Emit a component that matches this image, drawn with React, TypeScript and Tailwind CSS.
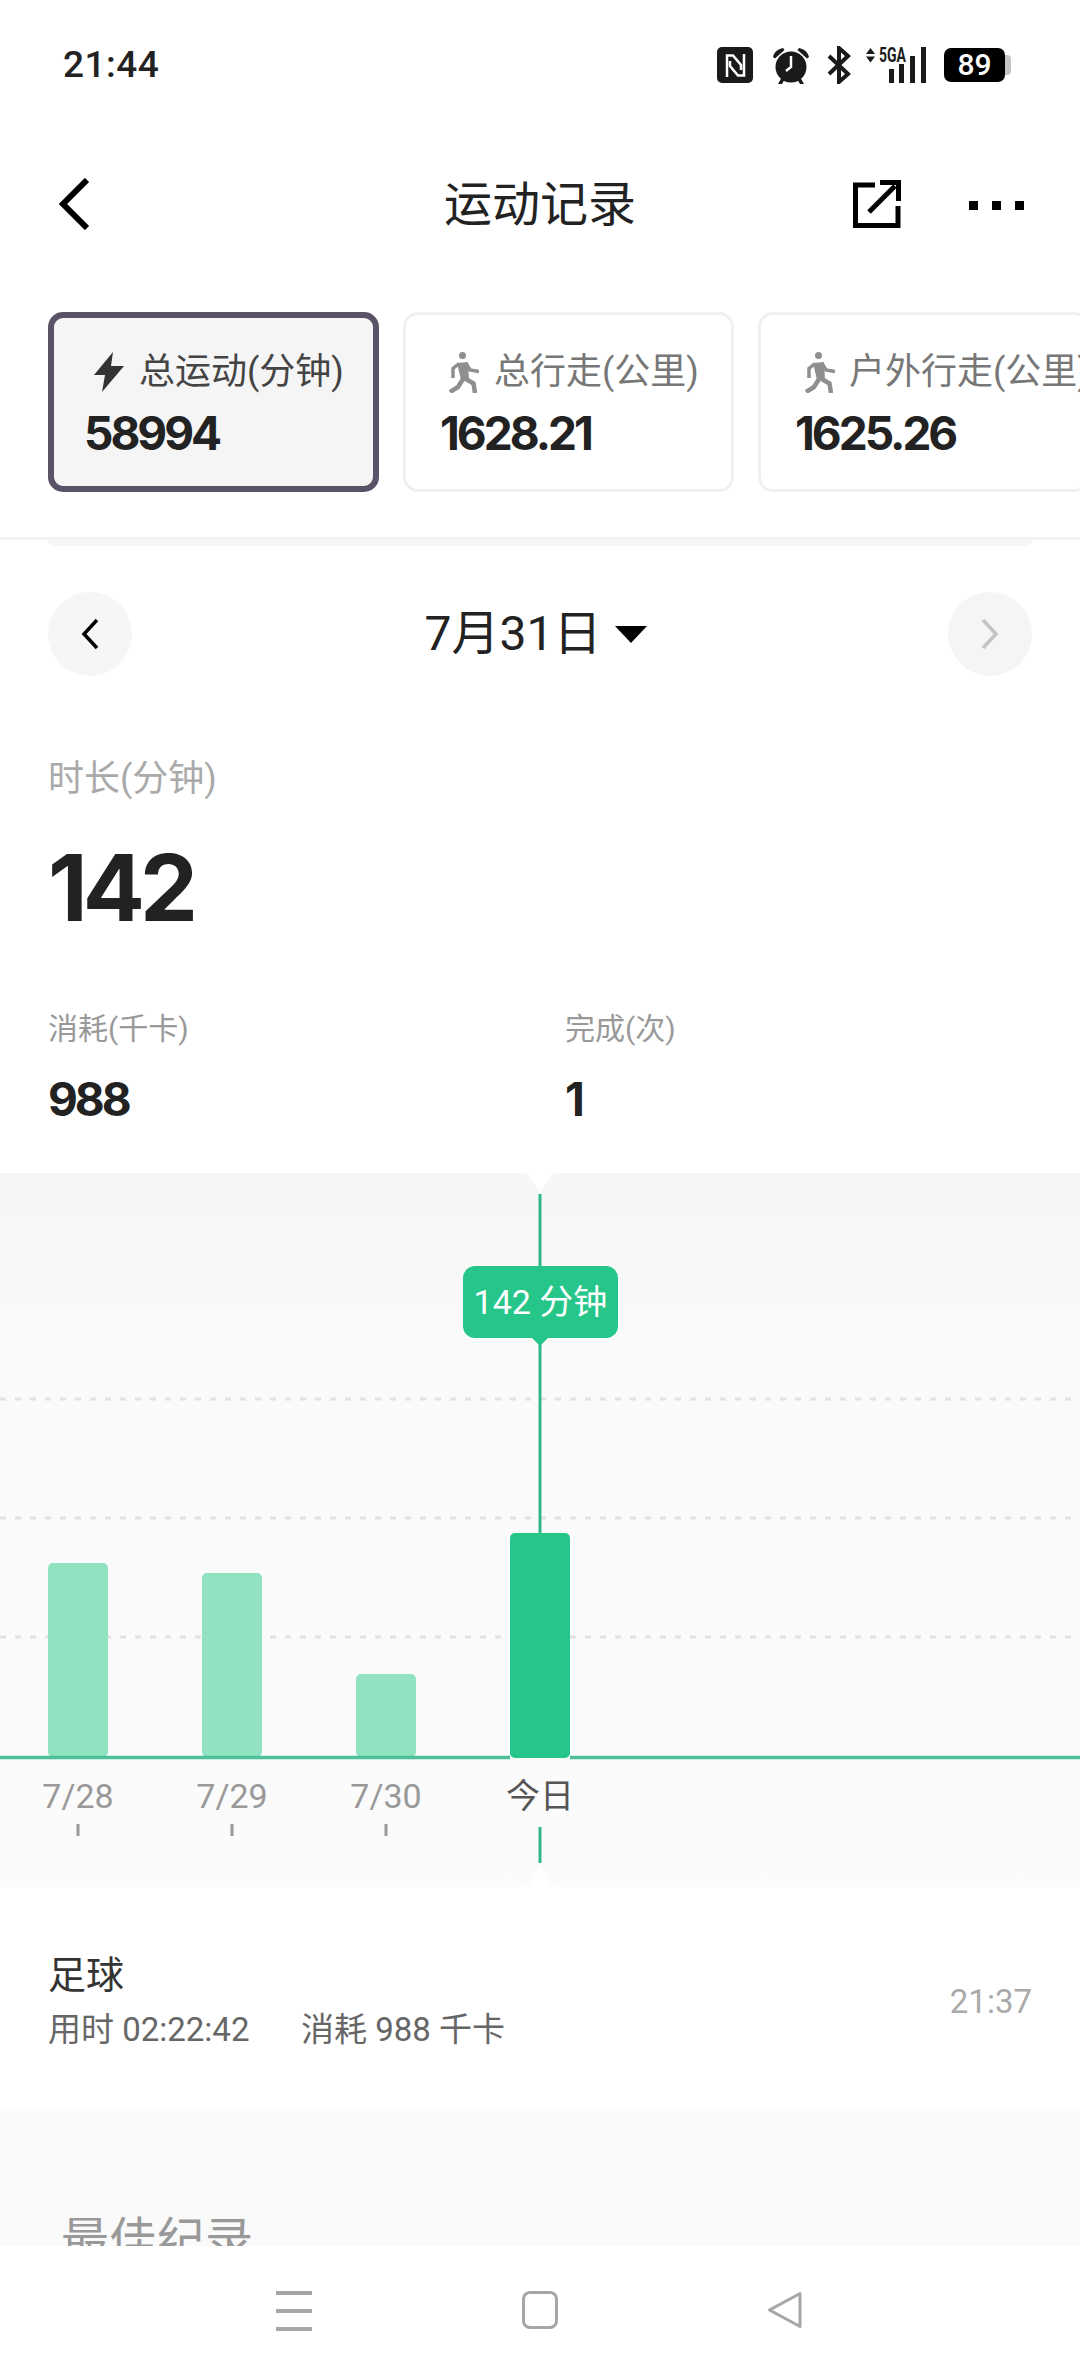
const cjk = '[font-family:Roboto,"Noto_Sans_CJK_SC",sans-serif]';

function Walker({ className }: { className?: string }) {
  return (
    <svg viewBox="0 0 30 41" className={className} fill="none" stroke="#8f8f8f">
      <circle cx="13.5" cy="3.500" r="3.500" fill="#8f8f8f" stroke="none" />
      <path d="M8 11l11-1 1 18h-8z" fill="#8f8f8f" stroke="none" />
      <path d="M18 13l3 5 9 1.500" strokeWidth="3.500" />
      <path d="M10 11.500l-6 5v9.500" strokeWidth="3.500" />
      <path d="M15 26l9.500 5.500 1.500 9.500" strokeWidth="4.500" />
      <path d="M14 27l-5 8-8 5" strokeWidth="4.500" />
    </svg>
  );
}

function StatCard({
  label,
  value,
  active,
  icon,
}: {
  label: string;
  value: string;
  active?: boolean;
  icon: React.ReactNode;
}) {
  return (
    <div
      className={
        active
          ? "w-[331px] h-[180px] shrink-0 rounded-[15px] border-[6px] border-[#5a5266] bg-[#f5f5f6] pl-[31px] pt-[29px]"
          : "w-[331px] h-[180px] shrink-0 rounded-[15px] border-[3px] border-[#f0f0f0] bg-white pl-[34px] pt-[32px]"
      }
    >
      <div className="flex items-center h-[50px] whitespace-nowrap">
        {icon}
        <span className={active ? "text-[36px] leading-[50px] text-[#444]" : "text-[36px] leading-[50px] text-[#777]"}>{label}</span>
      </div>
      <div className={active ? "mt-[10px] -ml-[1px] text-[46px] leading-[52px] font-bold tracking-[-3px] text-[#222] [font-family:Inter,sans-serif]" : "mt-[10px] text-[46px] leading-[52px] font-bold tracking-[-3px] text-[#222] [font-family:Inter,sans-serif]"}>{value}</div>
    </div>
  );
}

export default function App() {
  return (
    <div className={`relative w-[1080px] h-[2376px] overflow-hidden bg-white ${cjk}`}>
      {/* status bar */}
      <div className="h-[130px] flex items-center justify-between pl-[63px] pr-[69px]">
        <span className="text-[37px] font-medium text-[#222] tracking-[0.5px]">21:44</span>
        <div className="flex items-center h-[40px]">
          <svg viewBox="0 0 36 36" className="w-[36px] h-[36px]">
            <rect width="36" height="36" rx="5" fill="#1a1a1a" />
            <path d="M10 30V8.500h6L24 18v5M27 7V28.500h-6L13 19v-5" fill="none" stroke="#fff" strokeWidth="2.500" />
          </svg>
          <svg viewBox="0 0 38 38" className="w-[38px] h-[38px] ml-[19px]">
            <path d="M1 11C2 6 6 3 11 2l1.500 2L3 12.500zM37 11C36 6 32 3 27 2l-1.500 2L35 12.500z" fill="#1a1a1a" />
            <circle cx="19" cy="21" r="15.500" fill="#1a1a1a" />
            <path d="M6 38l4-7h4l-4 7zM32 38l-4-7h-4l4 7z" fill="#1a1a1a" />
            <path d="M19 10v11l-5 4" fill="none" stroke="#fff" strokeWidth="2.500" />
          </svg>
          <svg viewBox="0 0 24 38" className="w-[24px] h-[38px] ml-[17px]">
            <path d="M2 10l19 18-9 8V2l9 8L2 28" fill="none" stroke="#1a1a1a" strokeWidth="4" />
          </svg>
          <div className="relative w-[62px] h-[38px] ml-[15px]">
            <svg viewBox="0 0 62 38" className="absolute inset-0 w-[62px] h-[38px]">
              <path d="M0 8l4.500-6 4.500 6zM0 10.500l4.500 6 4.500-6z" fill="#1a1a1a" />
              <rect x="23" y="23" width="5" height="14" fill="#1a1a1a" />
              <rect x="33" y="18" width="5" height="19" fill="#1a1a1a" />
              <rect x="44" y="10" width="5" height="27" fill="#1a1a1a" />
              <rect x="55" y="1" width="5" height="36" fill="#1a1a1a" />
            </svg>
            <span className="absolute left-[13px] top-[-3px] text-[20px] leading-[24px] font-bold text-[#1a1a1a] scale-x-[0.7] origin-left">5GA</span>
          </div>
          <div className="ml-[16px] flex items-center">
            <div className="w-[61px] h-[34px] rounded-[7px] bg-black text-white text-[30px] leading-[34px] font-medium text-center">89</div>
            <div className="w-[6px] h-[20px] rounded-r-[4px] bg-[#c4c4c4]" />
          </div>
        </div>
      </div>

      {/* nav bar */}
      <div className="relative h-[150px] flex items-center justify-center">
        <svg viewBox="0 0 32 52" className="absolute left-[58px] top-[48px] w-[32px] h-[52px]">
          <path d="M29 2L5 26l24 24" fill="none" stroke="#000" strokeWidth="6" />
        </svg>
        <span className="text-[48px] text-[#222]">运动记录</span>
        <svg viewBox="0 0 48 48" className="absolute left-[853px] top-[50px] w-[48px] h-[48px]">
          <path d="M22 5H2.500v40.500H45V26" fill="none" stroke="#000" strokeWidth="5" />
          <path d="M16 32L42 6" fill="none" stroke="#000" strokeWidth="5" />
          <path d="M27 0h21v21h-5V5H27z" fill="#000" />
        </svg>
        <div className="absolute left-[969px] top-[71px] flex gap-[14px]">
          <div className="w-[9px] h-[9px] bg-black" />
          <div className="w-[9px] h-[9px] bg-black" />
          <div className="w-[9px] h-[9px] bg-black" />
        </div>
      </div>

      {/* stat cards */}
      <div className="mt-[32px] pl-[48px] flex gap-[24px]">
        <StatCard
          active
          label="总运动(分钟)"
          value="58994"
          icon={
            <svg viewBox="0 0 30 40" className="w-[30px] h-[40px] shrink-0 ml-[9px] mr-[15px]">
              <path d="M19 0L0 23h11L8 40l22-26H17z" fill="#333" />
            </svg>
          }
        />
        <StatCard label="总行走(公里)" value="1628.21" icon={<Walker className="w-[30px] h-[41px] shrink-0 ml-[9px] mr-[15px]" />} />
        <StatCard label="户外行走(公里)" value="1625.26" icon={<Walker className="w-[30px] h-[41px] shrink-0 ml-[10px] mr-[14px]" />} />
      </div>

      {/* divider */}
      <div className="mt-[45px] h-[3px] bg-[#f3f3f3]" />
      <div className="mx-[48px] h-[6px] rounded-b-[10px] bg-[#f6f6f6]" />

      {/* date switcher */}
      <div className="mt-[46px] h-[84px] px-[48px] flex items-center justify-between">
        <div className="w-[84px] h-[84px] rounded-full bg-[#f6f6f6] flex items-center justify-center">
          <svg viewBox="0 0 18 32" className="w-[18px] h-[32px]">
            <path d="M16 2L3 16l13 14" fill="none" stroke="#000" strokeWidth="3.500" />
          </svg>
        </div>
        <div className="flex items-center mr-[8px]">
          <span className="text-[48px] leading-[60px] text-[#222]">7月31日</span>
          <div className="ml-[14px] w-0 h-0 border-x-[16px] border-x-transparent border-t-[17px] border-t-black" />
        </div>
        <div className="w-[84px] h-[84px] rounded-full bg-[#f5f5f5] flex items-center justify-center">
          <svg viewBox="0 0 18 32" className="w-[18px] h-[32px]">
            <path d="M2 2l13 14L2 30" fill="none" stroke="#c4c4c4" strokeWidth="3.500" />
          </svg>
        </div>
      </div>

      {/* summary numbers */}
      <div className="mt-[78px] px-[48px]">
        <div className="text-[36px] leading-[50px] text-[#aaa]">时长(分钟)</div>
        <div className="mt-[34px] text-[92px] leading-[100px] font-bold tracking-[-5px] text-[#222] [font-family:Inter,sans-serif]">142</div>
        <div className="mt-[71px] flex">
          <div className="w-[517px]">
            <div className="text-[30px] leading-[40px] text-[#999]">消耗(千卡)</div>
            <div className="mt-[22px] text-[46px] leading-[56px] font-bold tracking-[-3px] text-[#222] [font-family:Inter,sans-serif]">988</div>
          </div>
          <div>
            <div className="text-[30px] leading-[40px] text-[#999]">完成(次)</div>
            <div className="mt-[22px] text-[46px] leading-[56px] font-bold text-[#222] [font-family:Inter,sans-serif]">1</div>
          </div>
        </div>
      </div>

      {/* chart */}
      <div className="relative mt-[46px] h-[714px]">
        <svg viewBox="0 0 1080 714" className="absolute inset-0 w-[1080px] h-[714px]">
          <defs>
            <linearGradient id="chartBg" x1="0" y1="0" x2="0" y2="1">
              <stop offset="0" stopColor="#f6f6f6" />
              <stop offset="0.25" stopColor="#fafafa" />
              <stop offset="1" stopColor="#fbfbfb" />
            </linearGradient>
          </defs>
          <path d="M0 0H527L540 20 553 0H1080V714H553L540 694 527 714H0z" fill="url(#chartBg)" />
          <path d="M0 226H1075M0 345H1075M0 464H1075" stroke="#e2e2e2" strokeWidth="3" strokeDasharray="6 9" />
          <rect x="48" y="390" width="60" height="194" rx="5" fill="#91e2c0" />
          <rect x="202" y="400" width="60" height="184" rx="5" fill="#91e2c0" />
          <rect x="356" y="501" width="60" height="83" rx="5" fill="#91e2c0" />
          <path d="M540 21V360" stroke="#2fb78a" strokeWidth="3" />
          <rect x="510" y="360" width="60" height="225" rx="5" fill="#26c68a" />
          <path d="M0 584.500H510M570 584.500H1080M48 584.500H416" stroke="#4dc09a" strokeWidth="3.500" />
          <path d="M78 651V663M232 651V663M386 651V663" stroke="#999" strokeWidth="3" />
          <path d="M540 654V690" stroke="#2fb78a" strokeWidth="3" />
        </svg>
        <div className="absolute left-[463px] top-[93px] w-[155px] h-[72px] rounded-[12px] bg-[#26c68a] text-white text-[34px] leading-[72px] text-center whitespace-nowrap">142 分钟</div>
        <div className="absolute left-[532px] top-[165px] w-0 h-0 border-x-[8px] border-x-transparent border-t-[8px] border-t-[#26c68a]" />
        <div className="absolute left-[0px] top-[601px] w-[156px] text-center text-[34px] leading-[44px] text-[#999]">7/28</div>
        <div className="absolute left-[154px] top-[601px] w-[156px] text-center text-[34px] leading-[44px] text-[#999]">7/29</div>
        <div className="absolute left-[308px] top-[601px] w-[156px] text-center text-[34px] leading-[44px] text-[#999]">7/30</div>
        <div className="absolute left-[462px] top-[601px] w-[156px] text-center text-[34px] leading-[44px] text-[#555]">今日</div>
      </div>

      {/* workout row */}
      <div className="h-[224px] px-[48px] pt-[63px] flex justify-between">
        <div>
          <div className="text-[38px] leading-[50px] text-[#333]">足球</div>
          <div className="mt-[7px] flex text-[33px] leading-[46px] text-[#666]">
            <span className="w-[253px]">用时 02:22:42</span>
            <span>消耗 988 千卡</span>
          </div>
        </div>
        <span className="mt-[29px] text-[33px] leading-[46px] text-[#aaa]">21:37</span>
      </div>

      {/* best records, cut off by the system nav */}
      <div className="h-[135px] overflow-hidden bg-[#fafafa] pl-[61px] pt-[100px]">
        <div className="text-[48px] leading-[60px] text-[#999]">最佳纪录</div>
      </div>

      {/* system nav */}
      <div className="h-[131px] bg-white flex items-start pt-[45px] pl-[276px]">
        <div className="w-[36px] h-[40px] flex flex-col justify-between">
          <div className="h-[4px] bg-[#a6a6a6]" />
          <div className="h-[4px] bg-[#a6a6a6]" />
          <div className="h-[4px] bg-[#a6a6a6]" />
        </div>
        <div className="ml-[210px] w-[36px] h-[38px] rounded-[8px] border-[3px] border-[#a6a6a6]" />
        <svg viewBox="0 0 36 38" className="ml-[209px] w-[36px] h-[38px]">
          <path d="M33 2.500V35.500L2.500 19z" fill="none" stroke="#a6a6a6" strokeWidth="3" strokeLinejoin="round" />
        </svg>
      </div>
    </div>
  );
}
